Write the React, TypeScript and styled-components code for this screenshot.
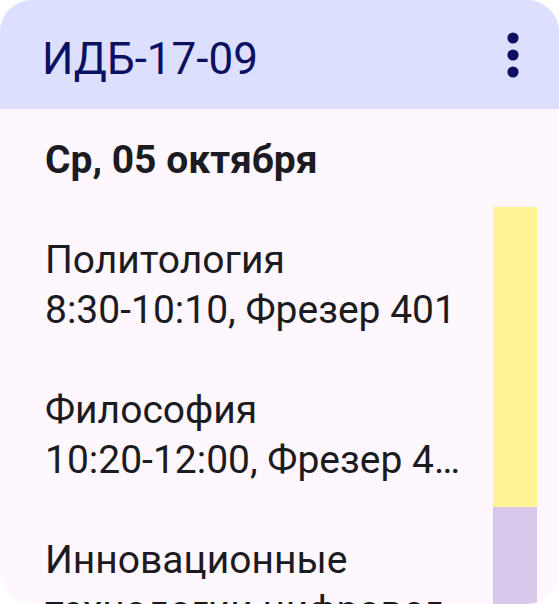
import React from "react";
import styled, { createGlobalStyle } from "styled-components";

const Global = createGlobalStyle`
  html, body { margin: 0; padding: 0; background: #ffffff; }
  body { font-family: Roboto, "Noto Sans", sans-serif; }
`;

const Card = styled.div`
  width: 559px;
  height: 604px;
  border-radius: 32px;
  overflow: hidden;
  background: #fef7fd;
  display: flex;
  flex-direction: column;
`;

const Header = styled.header`
  height: 109px;
  flex: none;
  background: #dce0fe;
  display: flex;
  align-items: center;
  justify-content: space-between;
  padding: 0 34px 0 42px;
`;

const Title = styled.h1`
  margin: 8px 0 0;
  font-family: Roboto, sans-serif;
  font-weight: 400;
  font-size: 44px;
  line-height: 52px;
  color: #0b1160;
`;

const MenuButton = styled.div`
  width: 24px;
  display: flex;
  justify-content: center;
`;

const DateRow = styled.div`
  height: 98px;
  flex: none;
  box-sizing: border-box;
  padding: 4px 0 0 45px;
  display: flex;
  align-items: center;
  font-size: 39px;
  font-weight: 700;
  color: #1c1b1f;
`;

const List = styled.div`
  display: flex;
  flex-direction: column;
`;

const Lesson = styled.div`
  height: 150px;
  flex: none;
  display: flex;
  padding-left: 45px;
  padding-right: 22px;
`;

const LessonText = styled.div`
  flex: 1;
  min-width: 0;
  display: flex;
  flex-direction: column;
  padding: 28px 18px 0 0;
  font-size: 39px;
  line-height: 50px;
  color: #1c1b1f;
`;

const Line = styled.div`
  white-space: nowrap;
  overflow: hidden;
  text-overflow: ellipsis;
`;

const Bar = styled.div<{ $color: string }>`
  width: 44px;
  flex: none;
  background: ${(p) => p.$color};
`;

const lessons = [
  { name: "Политология", info: "8:30-10:10, Фрезер 401", color: "#fff595" },
  { name: "Философия", info: "10:20-12:00, Фрезер 4…", color: "#fff595" },
  { name: "Инновационные", info: "технологии цифрового общества", color: "#d7c7ea" },
];

export default function App() {
  return (
    <>
      <Global />
      <Card>
        <Header>
          <Title>ИДБ-17-09</Title>
          <MenuButton>
            <svg width="12" height="46" viewBox="0 0 12 46">
              <circle cx="6" cy="6" r="5.6" fill="#0b1160" />
              <circle cx="6" cy="23" r="5.6" fill="#0b1160" />
              <circle cx="6" cy="40" r="5.6" fill="#0b1160" />
            </svg>
          </MenuButton>
        </Header>
        <DateRow>Ср, 05 октября</DateRow>
        <List>
          {lessons.map((l, i) => (
            <Lesson key={i}>
              <LessonText>
                <Line>{l.name}</Line>
                <Line>{l.info}</Line>
              </LessonText>
              <Bar $color={l.color} />
            </Lesson>
          ))}
        </List>
      </Card>
    </>
  );
}
